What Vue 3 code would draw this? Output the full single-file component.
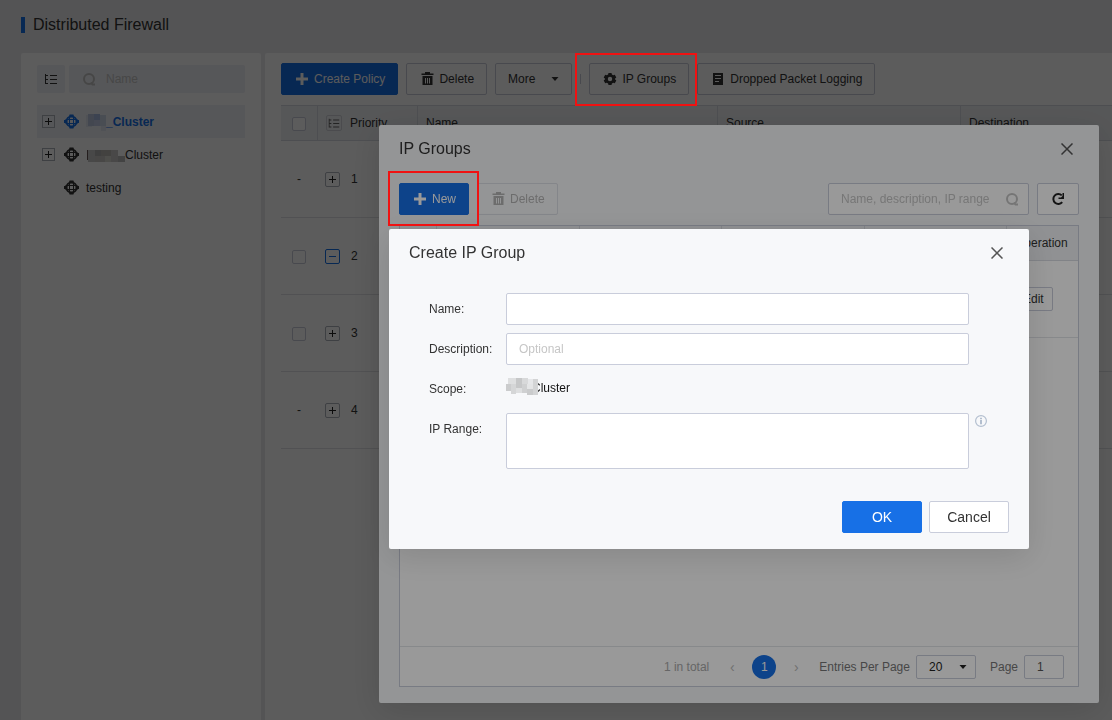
<script setup>
import { ref, h } from 'vue'

const shapes = {
  plus: { vb: '0 0 16 16', d: 'M6.5 2h3v4.5H14v3H9.5V14h-3V9.5H2v-3h4.5z' },
  trash: { vb: '0 0 16 16', d: 'M6 1h5v1.500h3.500V4h-12V2.500H6zM3.500 5h10v9h-10zM6 7v5.500h1V7zM8 7v5.500h1V7zM10 7v5.500h1V7z' },
  gear: { vb: '0 0 16 16', d: 'M6.500 2h3l.4 1.600 1.300.700 1.600-.5 1.500 2.600-1.200 1.200v.8l1.200 1.200-1.500 2.600-1.600-.5-1.300.700-.4 1.600h-3l-.4-1.600-1.300-.7-1.600.5-1.500-2.600 1.200-1.200v-.8L1.700 6.400l1.500-2.600 1.600.5 1.300-.7zM8 5.800a2.200 2.200 0 1 0 0 4.400 2.200 2.200 0 0 0 0-4.400z' },
  doc: { vb: '0 0 16 16', d: 'M3 2h10v12H3zM5 4v1h6V4zM5 7v1h6V7zM5 10v1h4v-1z' },
  caret: { vb: '0 0 16 16', d: 'M4.500 6h7L8 10z' },
  list: { vb: '0 0 16 16', d: 'M2 3h1v1h2v1H3v3h2v1H3v3h2v1H2zM7 4h7v1H7zM7 8h7v1H7zM7 12h7v1H7z' },
}
const Icon = (props) =>
  h('svg', { viewBox: shapes[props.name].vb, width: 16, height: 16, 'aria-hidden': 'true' }, [
    h('path', { d: shapes[props.name].d, fill: 'currentColor', 'fill-rule': 'evenodd' }),
  ])
Icon.props = ['name']

const clusters = [
  { name: '_Cluster', active: true, expandable: true, label: 'First cluster', mask: [[0, 2, 6, 12, '#dfe4ee'], [2, 1, 6, 12, '#bcc7e0'], [8, 1, 6, 6, '#a9bbe3'], [8, 7, 6, 6, '#c3cbe8'], [14, 2, 6, 11, '#cdd6e8'], [15, 13, 5, 5, '#e0e5ee']], width: 20 },
  { name: 'Cluster', expandable: true, label: 'Second cluster', mask: [[1, 4, 1, 10, '#655'], [2, 4, 7, 12, '#c8c8c8'], [9, 4, 6, 6, '#b0b0b0'], [9, 10, 10, 6, '#cac7c4'], [15, 4, 10, 6, '#bdb8b4'], [19, 10, 6, 6, '#dadad2'], [25, 4, 7, 12, '#cccaca'], [32, 10, 7, 6, '#bbb']], width: 39 },
  { name: 'testing' },
]
const rows = [
  { priority: 1, selectable: false },
  { priority: 2, selectable: true, open: true },
  { priority: 3, selectable: true },
  { priority: 4, selectable: false },
]
const scopeMask = [[2, 0, 8, 6, '#dedfe0'], [10, 0, 6, 10, '#c6c7c8'], [16, 0, 6, 6, '#d8d9da'], [22, 1, 5, 5, '#e6e7e9'], [0, 6, 5, 7, '#cbcccd'], [5, 6, 5, 10, '#d5d6d7'], [10, 10, 6, 5, '#dedfe0'], [16, 6, 5, 9, '#cfd0d1'], [21, 6, 6, 6, '#e4e5e6'], [21, 11, 6, 6, '#cacbcc'], [27, 1, 5, 16, '#d3d4d5']]

const nameFilter = ref('')
const groupFilter = ref('')
const form = ref({ name: '', description: '', range: '' })
const pageSize = ref('20')
const pageNo = ref('1')
</script>

<template>
  <div class="page">
    <header class="page-title"><h1>Distributed Firewall</h1></header>
    <div class="panels">
      <aside class="side">
        <div class="side-tools">
          <button class="flat" type="button" aria-label="Toggle tree"><Icon name="list" /></button>
          <label class="side-search">
            <svg viewBox="0 0 16 16" width="16" height="16"><circle cx="8" cy="8" r="5" /><path d="M10 11.500l1.500 2h2.500" /></svg>
            <input v-model="nameFilter" type="text" placeholder="Name" aria-label="Name" />
          </label>
        </div>
        <ul class="tree">
          <li v-for="c in clusters" :key="c.name" :class="{ active: c.active }">
            <button v-if="c.expandable" class="expander small" type="button" :aria-label="'Expand ' + c.label">
              <svg viewBox="0 0 11 11"><path d="M2 5.500h7M5.500 2v7" /></svg>
            </button>
            <span v-else class="expander-gap"></span>
            <svg class="cluster-icon" viewBox="0 0 15 15" width="15" height="15">
              <circle cx="7.500" cy="7.500" r="5" />
              <path d="M1.500 5.500h12M1.500 9.500h12M5.500 1.500v12M9.500 1.500v12" />
              <path class="nodes" d="M5.500.5h4v2h-4zM5.500 12.500h4v2h-4zM0 6h2.500v3H0zM12.500 6H15v3h-2.500z" />
            </svg>
            <a href="#"><svg v-if="c.mask" class="mosaic" :width="c.width" height="18"><rect v-for="(m, i) in c.mask" :key="i" :x="m[0]" :y="m[1]" :width="m[2]" :height="m[3]" :fill="m[4]" /></svg>{{ c.name }}</a>
          </li>
        </ul>
      </aside>

      <main class="main">
        <div class="toolbar">
          <button class="btn primary" type="button"><Icon name="plus" />Create Policy</button>
          <button class="btn" type="button"><Icon name="trash" />Delete</button>
          <button class="btn more" type="button">More<Icon name="caret" /></button>
          <span class="divider"></span>
          <button class="btn" type="button"><Icon name="gear" />IP Groups</button>
          <button class="btn" type="button"><Icon name="doc" />Dropped Packet Logging</button>
        </div>
        <table class="policies">
          <colgroup><col class="c-check" /><col class="c-prio" /><col class="c-name" /><col class="c-src" /><col /></colgroup>
          <thead>
            <tr>
              <th class="center"><input type="checkbox" aria-label="Select all" /></th>
              <th><div class="cell head"><span class="list-box"><Icon name="list" /></span>Priority</div></th>
              <th>Name</th>
              <th>Source</th>
              <th>Destination</th>
            </tr>
          </thead>
          <tbody>
            <tr v-for="r in rows" :key="r.priority">
              <td class="center">
                <input v-if="r.selectable" type="checkbox" :aria-label="'Select policy ' + r.priority" />
                <span v-else>-</span>
              </td>
              <td>
                <div class="cell">
                  <button class="expander" :class="{ open: r.open }" type="button" :aria-label="'Details of policy ' + r.priority">
                    <svg viewBox="0 0 13 13"><path :d="r.open ? 'M3 6.500h7' : 'M3 6.500h7M6.500 3v7'" /></svg>
                  </button>
                  {{ r.priority }}
                </div>
              </td>
              <td></td><td></td><td></td>
            </tr>
          </tbody>
        </table>
      </main>
    </div>

    <div class="mask groups-mask">
      <section class="dialog groups" role="dialog" aria-labelledby="groups-title">
        <header>
          <h2 id="groups-title">IP Groups</h2>
          <button class="close" type="button" aria-label="Close"><svg viewBox="0 0 12 12" width="12" height="12"><path d="M.5.5l11 11M11.500.5l-11 11" /></svg></button>
        </header>
        <div class="toolbar">
          <button class="btn primary" type="button"><Icon name="plus" />New</button>
          <button class="btn disabled" type="button" disabled><Icon name="trash" />Delete</button>
          <label class="group-search">
            <input v-model="groupFilter" type="text" placeholder="Name, description, IP range" aria-label="Search IP groups" />
            <svg viewBox="0 0 16 16" width="16" height="16"><circle cx="8" cy="8" r="5" /><path d="M10 11.500l1.500 2h2.500" /></svg>
          </label>
          <button class="btn refresh" type="button" aria-label="Refresh">
            <svg viewBox="0 0 16 16" width="16" height="16"><path d="M12.200 11.200A5 5 0 1 1 11.800 4.400" fill="none" stroke="currentColor" stroke-width="2" /><path d="M14 2v6H8.500V6.500h2.500L12.500 5V2z" fill="currentColor" /></svg>
          </button>
        </div>
        <div class="group-list">
          <table>
            <colgroup><col class="g-check" /><col /><col /><col /><col /><col class="g-op" /></colgroup>
            <thead><tr><th></th><th></th><th></th><th></th><th></th><th>Operation</th></tr></thead>
            <tbody><tr><td></td><td></td><td></td><td></td><td></td><td><button class="btn edit" type="button">Edit</button></td></tr></tbody>
          </table>
          <footer class="pager">
            <span class="total">1 in total</span>
            <button class="arrow" type="button" aria-label="Previous page">‹</button>
            <button class="current" type="button">1</button>
            <button class="arrow" type="button" aria-label="Next page">›</button>
            <label for="size">Entries Per Page</label>
            <span class="select">
              <select id="size" v-model="pageSize"><option>20</option></select>
              <Icon name="caret" />
            </span>
            <label for="page-no">Page</label>
            <input id="page-no" v-model="pageNo" type="text" />
          </footer>
        </div>
      </section>
    </div>

    <div class="mask create-mask">
      <form class="dialog create" role="dialog" aria-labelledby="create-title" @submit.prevent>
        <header>
          <h2 id="create-title">Create IP Group</h2>
          <button class="close" type="button" aria-label="Close"><svg viewBox="0 0 12 12" width="12" height="12"><path d="M.5.5l11 11M11.500.5l-11 11" /></svg></button>
        </header>
        <div class="fields">
          <label for="f-name">Name:</label>
          <input id="f-name" v-model="form.name" type="text" />
          <span></span>
          <label for="f-desc">Description:</label>
          <input id="f-desc" v-model="form.description" type="text" placeholder="Optional" />
          <span></span>
          <span class="label">Scope:</span>
          <span class="scope">Cluster<svg class="mosaic" width="32" height="18"><rect v-for="(m, i) in scopeMask" :key="i" :x="m[0]" :y="m[1]" :width="m[2]" :height="m[3]" :fill="m[4]" /></svg></span>
          <span></span>
          <label for="f-range">IP Range:</label>
          <textarea id="f-range" v-model="form.range"></textarea>
          <svg class="info" viewBox="0 0 12 12" width="12" height="12"><circle cx="6" cy="6" r="5.400" /><path class="i" d="M6 5v4.200M6 2.800v1.400" /></svg>
        </div>
        <div class="actions">
          <button class="btn primary" type="submit">OK</button>
          <button class="btn" type="button">Cancel</button>
        </div>
      </form>
    </div>

    <div class="callout callout-groups"></div>
    <div class="callout callout-new"></div>
  </div>
</template>

<style>
body {
  background: #ececed;
}
</style>

<style scoped>
.page {
  --blue: #1770e6;
  --line: #c9cddb;
  display: flex;
  flex-direction: column;
  height: 100vh;
  overflow: hidden;
  background: #ececed;
  color: #333;
  font: 12px/16px "Liberation Sans", Arial, sans-serif;
}
.page *, .page *::before { box-sizing: border-box; }
button, input, select, textarea { font: inherit; color: inherit; margin: 0; }
button { cursor: pointer; }
h1, h2 { margin: 0; font-size: 16px; font-weight: 400; line-height: 20px; }
svg { display: block; flex: none; }
input::placeholder { color: #c6c6c6; opacity: 1; }

.page-title { padding: 15px 21px 18px; }
.page-title h1 { display: flex; align-items: center; gap: 8px; }
.page-title h1::before { content: ""; width: 4px; height: 16px; background: var(--blue); }
.panels { display: flex; flex: 1; gap: 4px; padding-left: 21px; min-height: 0; }
.side { flex: none; width: 240px; padding: 12px 16px; background: #fff; border-radius: 2px 2px 0 0; }
.side-tools { display: flex; gap: 4px; }
.flat { display: grid; place-items: center; width: 28px; height: 28px; padding: 0; border: 0; border-radius: 2px; background: #f0f3f8; }
.side-search { display: flex; flex: 1; align-items: center; gap: 9px; min-width: 0; padding: 0 12px; border-radius: 2px; background: #f0f3f8; }
.side-search svg, .group-search svg { fill: none; stroke: #c4c4c4; stroke-width: 2; }
.side-search input, .group-search input { flex: 1; min-width: 0; padding: 0; border: 0; background: none; outline: 0; }
.tree { margin: 12px 0 0; padding: 0; list-style: none; }
.tree li { display: flex; align-items: center; height: 33px; padding-left: 5px; }
.tree li.active { background: #f0f3f8; color: var(--blue); font-weight: 700; }
.tree a { display: flex; align-items: center; color: inherit; text-decoration: none; }
.expander-gap { width: 13px; }
.cluster-icon { margin: 0 7px 0 9px; fill: none; stroke: currentColor; stroke-width: 1; }
.cluster-icon circle { stroke-width: 2; }
.cluster-icon .nodes { fill: currentColor; stroke: none; }
.expander { flex: none; width: 15px; height: 15px; padding: 0; border: 1px solid #aeb2bc; border-radius: 2px; background: none; }
.expander.small { width: 13px; height: 13px; border-radius: 0; }
.expander svg { width: 100%; height: 100%; stroke: #222; stroke-width: 1; }
.expander.open { border-color: var(--blue); }
.expander.open svg { stroke: var(--blue); }

.main { flex: 1; min-width: 0; padding: 10px 0 0 16px; overflow: hidden; background: #fff; border-radius: 2px 0 0 0; }
.toolbar { display: flex; align-items: center; gap: 8px; }
.btn { display: flex; align-items: center; justify-content: center; gap: 4px; height: 32px; padding: 0 12px; border: 1px solid var(--line); border-radius: 2px; background: #fff; white-space: nowrap; }
.btn.primary { border-color: var(--blue); background: var(--blue); color: #fff; }
.btn.more { gap: 12px; padding-right: 8px; }
.btn.disabled { border-color: #dcdfe6; background: none; color: #b5b5b5; cursor: default; }
.divider { width: 1px; height: 10px; background: var(--line); }

table { width: 100%; border-collapse: separate; border-spacing: 0; table-layout: fixed; }
th, td { padding: 0 8px; text-align: left; font-weight: 400; }
th { height: 36px; border-top: 1px solid #d8dbe2; border-bottom: 1px solid #d8dbe2; background: #f0f2f5; }
th + th { border-left: 1px solid #d8dbe2; }
.policies { margin-top: 10px; }
.policies td { height: 77px; border-bottom: 1px solid #e2e3e7; }
.policies .center { padding: 0; text-align: center; }
.c-check { width: 36px; }
.c-prio { width: 100px; }
.c-name { width: 300px; }
.c-src { width: 243px; }
.cell { display: flex; align-items: center; gap: 11px; }
.cell.head { gap: 8px; }
.list-box { display: grid; place-items: center; width: 16px; height: 16px; border: 1px solid #d0d3da; border-radius: 2px; color: #666; }
.list-box svg { width: 14px; height: 14px; }
input[type="checkbox"] { display: inline-block; width: 14px; height: 14px; vertical-align: middle; appearance: none; border: 1px solid var(--line); border-radius: 2px; background: #fff; }

.mask { position: fixed; inset: 0; display: flex; align-items: flex-start; background: rgba(0, 0, 0, 0.4); }
.groups-mask { align-items: stretch; padding: 125px 13px 17px 379px; }
.create-mask { padding: 229px 83px 0 389px; }
.dialog { display: flex; flex: 1; flex-direction: column; min-width: 0; border-radius: 2px; background: #f7f8fa; box-shadow: 0 8px 32px rgba(0, 0, 0, 0.12); }
.dialog header { display: flex; align-items: center; justify-content: space-between; height: 48px; padding: 0 20px; }
.close { display: grid; place-items: center; width: 24px; height: 24px; padding: 0; border: 0; background: none; }
.close svg { fill: none; stroke: #555; stroke-width: 1.500; }
.groups { padding-bottom: 16px; }
.groups .toolbar { padding: 10px 20px; }
.group-search { display: flex; align-items: center; gap: 8px; width: 201px; height: 32px; margin-left: auto; padding: 0 8px 0 12px; border: 1px solid var(--line); border-radius: 2px; background: #fff; }
.refresh { width: 42px; color: #222; }
.group-list { display: flex; flex: 1; flex-direction: column; margin: 0 20px; border: 1px solid var(--line); background: #fff; }
.group-list th { border-top: 0; height: 35px; }
.group-list td { height: 77px; border-bottom: 1px solid #e2e4e8; }
.g-check { width: 36px; }
.g-op { width: 72px; }
.edit { height: 24px; padding: 0 8px; }
.pager { display: flex; align-items: center; justify-content: flex-end; height: 40px; margin-top: auto; padding-right: 14px; border-top: 1px solid #e2e4e8; color: #777; }
.pager .total { margin-right: 16px; color: #aaa; }
.arrow, .current { padding: 0; border: 0; background: none; }
.arrow { width: 14px; color: #bbb; font-size: 14px; }
.current { width: 24px; height: 24px; margin: 0 13px; border-radius: 50%; background: var(--blue); color: #fff; }
.pager label[for="size"] { margin: 0 6px 0 16px; }
.select { position: relative; width: 60px; height: 24px; color: #222; }
.select select { width: 100%; height: 100%; padding: 0 12px; appearance: none; border: 1px solid var(--line); border-radius: 2px; background: #fff; outline: 0; }
.select svg { position: absolute; top: 4px; right: 5px; pointer-events: none; }
.pager label[for="page-no"] { margin: 0 6px 0 14px; }
.pager input { width: 40px; height: 24px; padding: 0 12px; border: 1px solid var(--line); border-radius: 2px; background: #fff; color: #555; }

.fields { display: grid; grid-template-columns: 77px 1fr 40px; gap: 8px 0; padding: 16px 20px 0 40px; line-height: 32px; }
.fields input, .fields textarea { width: 100%; height: 32px; padding: 0 12px; border: 1px solid var(--line); border-radius: 2px; background: #fff; outline: 0; }
.fields textarea { display: block; height: 56px; padding: 8px 12px; resize: none; line-height: 16px; }
.scope { position: relative; padding-left: 26px; color: #111; line-height: 30px; }
.scope .mosaic { position: absolute; top: 5px; left: 0; }
.info { margin: 2px 0 0 6px; fill: none; stroke: #b3bfcf; stroke-width: 1.200; }
.info .i { stroke-width: 2; }
.actions { display: flex; justify-content: flex-end; gap: 7px; padding: 32px 20px 16px; }
.actions .btn { width: 80px; font-size: 14px; }

.callout { position: fixed; border: 2px solid #f01212; pointer-events: none; }
.callout-groups { top: 53px; left: 575px; width: 122px; height: 53px; }
.callout-new { top: 171px; left: 388px; width: 91px; height: 55px; }
</style>
